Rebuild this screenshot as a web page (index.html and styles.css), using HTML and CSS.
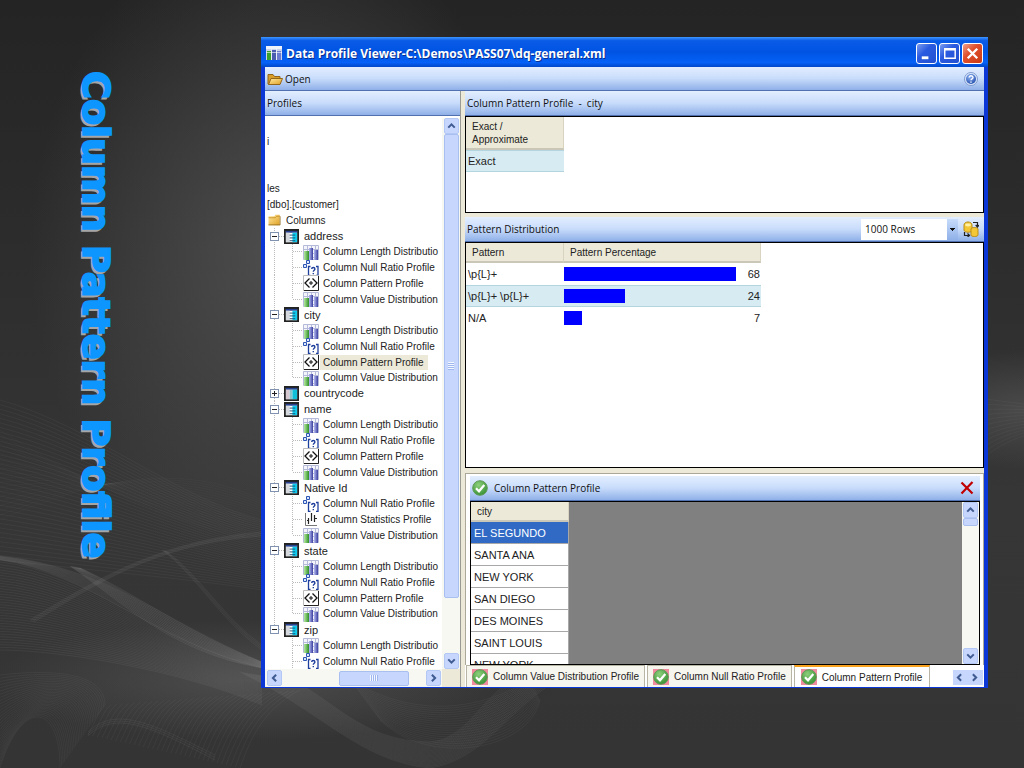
FILE: index.html
```html
<!DOCTYPE html>
<html lang="en">
<head>
    <meta charset="UTF-8">
    <meta name="viewport" content="width=device-width, initial-scale=1.0">
    <title>Column Pattern Profile</title>
    <link rel="stylesheet" href="styles.css">
</head>
<body>
    <!-- Shared icons -->
    <svg class="icon-defs" aria-hidden="true">
        <defs>
            <linearGradient id="folder-fill" x1="0" y1="0" x2="1" y2="1">
                <stop offset="0" stop-color="#ffe9a0"/><stop offset="1" stop-color="#e0a023"/>
            </linearGradient>
            <radialGradient id="help-fill" cx=".4" cy=".3" r=".8">
                <stop offset="0" stop-color="#8db4f4"/><stop offset="1" stop-color="#1c46a8"/>
            </radialGradient>
            <radialGradient id="check-fill" cx=".4" cy=".3" r=".8">
                <stop offset="0" stop-color="#8ed07c"/><stop offset="1" stop-color="#2f8a2c"/>
            </radialGradient>
            <linearGradient id="green-bar"><stop offset="0" stop-color="#b5e8a0"/><stop offset="1" stop-color="#2f8f27"/></linearGradient>
            <linearGradient id="blue-bar"><stop offset="0" stop-color="#b4bbf2"/><stop offset="1" stop-color="#3b3f9e"/></linearGradient>
        </defs>
        <symbol id="chart" viewBox="0 0 16 16">
            <path d="M.5 1.500h15v14H.5zM4.500 1v15M8.500 1v15M12.500 1v15M0 5.500h16M0 9.500h16M0 13.500h16" stroke="#b4bad8" fill="#f4f5fb"/>
            <path d="M1 7h5v9H1z" fill="url(#green-bar)"/>
            <path d="M6 4h4v12H6z" fill="url(#blue-bar)"/>
            <path d="M11 6h4v10h-4z" fill="url(#blue-bar)"/>
        </symbol>
        <symbol id="table" viewBox="0 0 16 16">
            <path d="M1 1h14v14H1z" fill="#fff" stroke="#222" stroke-width="2"/>
            <path d="M2 2h12v2H2z" fill="#27408f"/>
            <path d="M2 4h4v10H2z" fill="#d5d8dc"/>
            <path d="M9 4h5v10H9z" fill="#10cdf0"/>
            <path d="M6 6.500h6M6 9.500h6M6 12.500h6" stroke="#174f73"/>
        </symbol>
        <symbol id="table-shut" viewBox="0 0 16 16">
            <path d="M1 1h14v14H1z" fill="#fff" stroke="#222" stroke-width="2"/>
            <path d="M2 2h12v2H2z" fill="#27408f"/>
            <path d="M2 4h4v10H2z" fill="#d8c9d0"/>
            <path d="M6 4h3v10H6z" fill="#8fc3cc"/>
            <path d="M9 4h5v10H9z" fill="#10bfd8"/>
        </symbol>
        <symbol id="nulls" viewBox="0 0 16 16">
            <path d="M3.500.500h3v3h-3zM.500 4.500h3v3h-3z" fill="#dbe6ff" stroke="#2d55b4"/>
            <path d="M7.500 6.500h-2v9h2M13 6.500h2v9h-2" fill="none" stroke="#1f3f9c" stroke-width="1.300"/>
            <path d="M8.700 9c0-2 3.200-2 3.200 0 0 1.300-1.600 1.200-1.600 2.700M10.300 13v1.200" fill="none" stroke="#1f3f9c" stroke-width="1.400"/>
        </symbol>
        <symbol id="pattern" viewBox="0 0 16 16">
            <path d="M.5.5h15v15H.5z" fill="#fff" stroke="#bbb"/>
            <path d="M15.500 1v14.500H1" fill="none" stroke="#222"/>
            <path d="M6.500 3.500 2 8l4.500 4.500M9.500 3.500 14 8l-4.500 4.500" fill="none" stroke="#111" stroke-width="1.300"/>
            <path d="M8 6v4M6 8h4" stroke="#111"/>
        </symbol>
        <symbol id="stats" viewBox="0 0 16 16">
            <path d="M2.500 2v12.500H14" fill="none" stroke="#777"/>
            <path d="M5.500 7v6M8.500 2v8M11.500 4v7" stroke="#222" stroke-width="1.200"/>
            <path d="M4 9.500h2M11 7.500h3" stroke="#222"/>
        </symbol>
        <symbol id="check" viewBox="0 0 16 16">
            <circle cx="8" cy="8" r="7.300" fill="url(#check-fill)" stroke="#5f9a58"/>
            <path d="M4 8.300 7 11.300 12.300 5" fill="none" stroke="#fff" stroke-width="2.200"/>
        </symbol>
        <symbol id="folder" viewBox="0 0 16 16">
            <path d="M1 3.500h5l1.500 2H13V13H1z" fill="#d99d2b" stroke="#94661a"/>
            <path d="M4 7.500h11.500L13 13.500H1.500z" fill="url(#folder-fill)" stroke="#94661a"/>
        </symbol>
        <symbol id="folder-shut" viewBox="0 0 16 16">
            <path d="M0 3h8l1-2h6v14H0z" fill="url(#folder-fill)"/>
            <path d="M0 5h9l2-2h4" fill="none" stroke="#c08a1e"/>
            <path d="M0 14.500h15.500V3" fill="none" stroke="#8a671c"/>
        </symbol>
        <symbol id="help" viewBox="0 0 16 16">
            <circle cx="8" cy="8" r="6.500" fill="#dce8fb" stroke="#7f9cd0"/>
            <circle cx="8" cy="8" r="5" fill="url(#help-fill)"/>
            <path d="M6.200 6.500c0-2.400 3.800-2.200 3.800 0 0 1.500-2 1.300-2 2.800M8 10.500v1.200" fill="none" stroke="#fff" stroke-width="1.400"/>
        </symbol>
        <symbol id="refresh" viewBox="0 0 16 16">
            <path d="M1 4c0-4 8-4 8 0v5c0 3-8 3-8 0z" fill="#f3c736" stroke="#b98c17"/>
            <ellipse cx="5" cy="4" rx="3" ry="1.400" fill="#fff0a8"/>
            <path d="M8 8c0-2 7-2 7 0v6c0 2-7 2-7 0z" fill="#f3c736" stroke="#b98c17"/>
            <path d="M10 1.500h4.500V5M12.700 4l1.800 2 1.500-2M1.500 11v3.500H6M4.500 12.500l2 2-2 1.500" fill="none" stroke="#222" stroke-width="1.200"/>
        </symbol>
        <symbol id="app" viewBox="0 0 16 16">
            <path d="M0 1h16v14H0z" fill="#c9d3ec"/>
            <path d="M0 1h16v3H0z" fill="#eef2fb"/>
            <path d="M1 6h4v9H1z" fill="#3aa12f"/><path d="M6 5h4v10H6z" fill="#4a5cb0"/><path d="M11 6h4v9h-4z" fill="#6a7bd0"/>
            <path d="M5.500 4v11M10.500 4v11M0 7.500h16" stroke="#fff" stroke-opacity=".6"/>
        </symbol>
        <symbol id="up" viewBox="0 0 16 16"><path d="M4 10l4-4 4 4" fill="none" stroke="#3f5b91" stroke-width="2.500"/></symbol>
        <symbol id="down" viewBox="0 0 16 16"><path d="M4 6l4 4 4-4" fill="none" stroke="#3f5b91" stroke-width="2.500"/></symbol>
        <symbol id="left" viewBox="0 0 16 16"><path d="M10 4L6 8l4 4" fill="none" stroke="#3f5b91" stroke-width="2.500"/></symbol>
        <symbol id="right" viewBox="0 0 16 16"><path d="M6 4l4 4-4 4" fill="none" stroke="#3f5b91" stroke-width="2.500"/></symbol>
    </svg>

    <svg class="waves" id="waves" viewBox="0 0 1024 768" preserveAspectRatio="none" aria-hidden="true"></svg>

    <div class="slide">
        <h1 class="slide-title">Column Pattern Profile</h1>

        <main class="window">
            <header class="titlebar">
                <svg class="icon"><use href="#app"/></svg>
                <span class="titlebar-text">Data Profile Viewer-C:\Demos\PASS07\dq-general.xml</span>
                <button class="win-btn" aria-label="Minimize"><svg viewBox="0 0 20 20"><path d="M5 14.500h7" stroke="#fff" stroke-width="3"/></svg></button>
                <button class="win-btn" aria-label="Maximize"><svg viewBox="0 0 20 20"><path d="M5 5h11v10H5zM5 6h11" fill="none" stroke="#fff" stroke-width="1.500"/></svg></button>
                <button class="win-btn win-close" aria-label="Close"><svg viewBox="0 0 20 20"><path d="M5 5l10 10M15 5L5 15" stroke="#fff" stroke-width="2.500"/></svg></button>
            </header>

            <div class="bar toolbar">
                <button class="tool-btn"><svg class="icon"><use href="#folder"/></svg>Open</button>
                <button class="tool-btn" aria-label="Help"><svg class="icon"><use href="#help"/></svg></button>
            </div>

            <div class="panes">
                <section class="left-pane">
                    <h2 class="bar">Profiles</h2>
                    <div class="tree-box">
                        <ul class="tree">
                            <li></li>
                            <li>i</li>
                            <li></li>
                            <li></li>
                            <li>les</li>
                            <li>[dbo].[customer]</li>
                            <li class="folder"><svg class="icon"><use href="#folder-shut"/></svg>Columns</li>
                            <li class="node"><button class="toggle" aria-label="Collapse"></button><svg class="icon"><use href="#table"/></svg>address</li>
                            <li class="leaf"><svg class="icon"><use href="#chart"/></svg><span>Column Length Distributio</span></li>
                            <li class="leaf"><svg class="icon"><use href="#nulls"/></svg><span>Column Null Ratio Profile</span></li>
                            <li class="leaf"><svg class="icon"><use href="#pattern"/></svg><span>Column Pattern Profile</span></li>
                            <li class="leaf last"><svg class="icon"><use href="#chart"/></svg><span>Column Value Distribution</span></li>
                            <li class="node"><button class="toggle" aria-label="Collapse"></button><svg class="icon"><use href="#table"/></svg>city</li>
                            <li class="leaf"><svg class="icon"><use href="#chart"/></svg><span>Column Length Distributio</span></li>
                            <li class="leaf"><svg class="icon"><use href="#nulls"/></svg><span>Column Null Ratio Profile</span></li>
                            <li class="leaf selected"><svg class="icon"><use href="#pattern"/></svg><span>Column Pattern Profile</span></li>
                            <li class="leaf last"><svg class="icon"><use href="#chart"/></svg><span>Column Value Distribution</span></li>
                            <li class="node"><button class="toggle closed" aria-label="Expand"></button><svg class="icon"><use href="#table-shut"/></svg>countrycode</li>
                            <li class="node"><button class="toggle" aria-label="Collapse"></button><svg class="icon"><use href="#table"/></svg>name</li>
                            <li class="leaf"><svg class="icon"><use href="#chart"/></svg><span>Column Length Distributio</span></li>
                            <li class="leaf"><svg class="icon"><use href="#nulls"/></svg><span>Column Null Ratio Profile</span></li>
                            <li class="leaf"><svg class="icon"><use href="#pattern"/></svg><span>Column Pattern Profile</span></li>
                            <li class="leaf last"><svg class="icon"><use href="#chart"/></svg><span>Column Value Distribution</span></li>
                            <li class="node"><button class="toggle" aria-label="Collapse"></button><svg class="icon"><use href="#table"/></svg>Native Id</li>
                            <li class="leaf"><svg class="icon"><use href="#nulls"/></svg><span>Column Null Ratio Profile</span></li>
                            <li class="leaf"><svg class="icon"><use href="#stats"/></svg><span>Column Statistics Profile</span></li>
                            <li class="leaf last"><svg class="icon"><use href="#chart"/></svg><span>Column Value Distribution</span></li>
                            <li class="node"><button class="toggle" aria-label="Collapse"></button><svg class="icon"><use href="#table"/></svg>state</li>
                            <li class="leaf"><svg class="icon"><use href="#chart"/></svg><span>Column Length Distributio</span></li>
                            <li class="leaf"><svg class="icon"><use href="#nulls"/></svg><span>Column Null Ratio Profile</span></li>
                            <li class="leaf"><svg class="icon"><use href="#pattern"/></svg><span>Column Pattern Profile</span></li>
                            <li class="leaf last"><svg class="icon"><use href="#chart"/></svg><span>Column Value Distribution</span></li>
                            <li class="node end"><button class="toggle" aria-label="Collapse"></button><svg class="icon"><use href="#table"/></svg>zip</li>
                            <li class="leaf end"><svg class="icon"><use href="#chart"/></svg><span>Column Length Distributio</span></li>
                            <li class="leaf end"><svg class="icon"><use href="#nulls"/></svg><span>Column Null Ratio Profile</span></li>
                        </ul>
                        <div class="scroll-v">
                            <button class="scroll-btn" aria-label="Scroll up"><svg><use href="#up"/></svg></button>
                            <div class="thumb tree-thumb-v"></div>
                            <div class="track"></div>
                            <button class="scroll-btn" aria-label="Scroll down"><svg><use href="#down"/></svg></button>
                        </div>
                        <div class="scroll-h">
                            <button class="scroll-btn" aria-label="Scroll left"><svg><use href="#left"/></svg></button>
                            <div class="thumb tree-thumb-h"></div>
                            <button class="scroll-btn" aria-label="Scroll right"><svg><use href="#right"/></svg></button>
                        </div>
                    </div>
                </section>

                <section class="right-pane">
                    <h2 class="bar">Column Pattern Profile &nbsp;- &nbsp;city</h2>
                    <div class="sheet summary">
                        <table class="grid">
                            <thead><tr><th class="col-first">Exact /<br>Approximate</th></tr></thead>
                            <tbody><tr class="picked"><td>Exact</td></tr></tbody>
                        </table>
                    </div>

                    <div class="bar dist-bar">
                        <h2 class="bar-title">Pattern Distribution</h2>
                        <select class="rows-select" aria-label="Rows to show"><option>1000 Rows</option></select>
                        <button class="drill-btn" aria-label="Drill down"><svg class="icon"><use href="#refresh"/></svg></button>
                    </div>
                    <div class="sheet distribution">
                        <table class="grid">
                            <thead><tr><th class="col-first">Pattern</th><th class="col-percent">Pattern Percentage</th></tr></thead>
                            <tbody>
                                <tr><td>\p{L}+</td><td><div class="meter"><div class="meter-fill" style="width: 88%"></div>68</div></td></tr>
                                <tr class="picked"><td>\p{L}+ \p{L}+</td><td><div class="meter"><div class="meter-fill" style="width: 31%"></div>24</div></td></tr>
                                <tr><td>N/A</td><td><div class="meter"><div class="meter-fill" style="width: 9%"></div>7</div></td></tr>
                            </tbody>
                        </table>
                    </div>

                    <div class="drill">
                        <div class="bar drill-bar">
                            <svg class="icon"><use href="#check"/></svg>
                            <h2 class="bar-title">Column Pattern Profile</h2>
                            <button class="drill-close" aria-label="Close"><svg viewBox="0 0 14 14"><path d="M1.500 1.500l11 11M12.500 1L1.500 12.500" stroke="#c00000" stroke-width="2.200"/></svg></button>
                        </div>
                        <div class="sheet drill-sheet">
                            <div class="drill-rows">
                                <table class="grid cities">
                                    <thead><tr><th class="col-first">city</th></tr></thead>
                                    <tbody>
                                        <tr class="current"><td>EL SEGUNDO</td></tr>
                                        <tr><td>SANTA ANA</td></tr>
                                        <tr><td>NEW YORK</td></tr>
                                        <tr><td>SAN DIEGO</td></tr>
                                        <tr><td>DES MOINES</td></tr>
                                        <tr><td>SAINT LOUIS</td></tr>
                                        <tr><td>NEW YORK</td></tr>
                                    </tbody>
                                </table>
                            </div>
                            <div class="scroll-v">
                                <button class="scroll-btn" aria-label="Scroll up"><svg><use href="#up"/></svg></button>
                                <div class="thumb drill-thumb"></div>
                                <div class="track"></div>
                                <button class="scroll-btn" aria-label="Scroll down"><svg><use href="#down"/></svg></button>
                            </div>
                        </div>
                    </div>

                    <nav class="tabs">
                        <button class="tab"><svg class="icon"><use href="#check"/></svg>Column Value Distribution Profile</button>
                        <button class="tab"><svg class="icon"><use href="#check"/></svg>Column Null Ratio Profile</button>
                        <button class="tab active"><svg class="icon"><use href="#check"/></svg>Column Pattern Profile</button>
                        <div class="tab-scroll">
                            <button aria-label="Previous tab"><svg><use href="#left"/></svg></button>
                            <button aria-label="Next tab"><svg><use href="#right"/></svg></button>
                        </div>
                    </nav>
                </section>
            </div>
        </main>
    </div>

    <script>
        // Each family of lines blends from one cubic curve to another
        const families = [
            // from, to, number of lines, opacity
            [[0, 400, 90, 425, 180, 500, 262, 520], [0, 560, 90, 570, 200, 580, 262, 590], 36, 0.04],
            [[0, 430, 60, 470, 180, 530, 262, 540], [0, 520, 90, 480, 180, 460, 262, 500], 20, 0.02],
            [[0, 556, 110, 568, 160, 620, 262, 662], [0, 560, 90, 572, 150, 640, 262, 668], 14, 0.05],
            [[80, 568, 130, 590, 190, 635, 262, 662], [70, 566, 120, 600, 170, 652, 262, 668], 12, 0.07],
            [[0, 562, 90, 572, 150, 640, 262, 668], [0, 650, 60, 650, 180, 670, 262, 705], 34, 0.05],
            [[30, 620, 110, 570, 170, 540, 262, 532], [34, 622, 112, 572, 172, 542, 262, 536], 4, 0.06],
            [[165, 550, 200, 575, 225, 620, 262, 645], [162, 550, 196, 575, 222, 622, 262, 650], 4, 0.05],
            [[0, 675, 60, 668, 105, 675, 105, 705], [0, 768, 20, 700, 60, 700, 60, 768], 30, 0.04],
            [[105, 705, 98, 712, 96, 720, 88, 735], [300, 690, 262, 710, 250, 740, 240, 768], 34, 0.04],
            [[88, 732, 115, 706, 150, 722, 215, 755], [88, 736, 115, 710, 150, 726, 215, 760], 3, 0.05],
            [[290, 680, 330, 695, 360, 742, 430, 742], [240, 672, 320, 710, 360, 762, 430, 768], 24, 0.05],
            [[430, 742, 465, 740, 480, 700, 512, 680], [430, 768, 480, 760, 500, 720, 545, 688], 22, 0.05],
            [[350, 680, 410, 715, 470, 715, 530, 680], [380, 720, 430, 768, 530, 750, 540, 700], 20, 0.04],
            [[980, 398, 990, 400, 1010, 402, 1024, 404], [980, 462, 990, 450, 1010, 440, 1024, 436], 12, 0.03]
        ];

        const waves = document.getElementById("waves");
        families.forEach(([from, to, count, opacity]) => {
            let d = "";
            for (let i = 0; i < count; i++) {
                const p = from.map((v, k) => v + (to[k] - v) * i / (count - 1));
                d += `M${p[0]} ${p[1]}C${p.slice(2).join(" ")}`;
            }
            const path = document.createElementNS("http://www.w3.org/2000/svg", "path");
            path.setAttribute("d", d);
            path.setAttribute("stroke-opacity", opacity);
            waves.appendChild(path);
        });
    </script>
</body>
</html>
```

FILE: styles.css
```css
* {
    box-sizing: border-box;
}

body {
    margin: 0;
    background-color: #303030;
    background-image:
        radial-gradient(ellipse 250px 330px at 280px 250px, rgba(92, 92, 92, 0.7), rgba(60, 60, 60, 0)),
        radial-gradient(ellipse 120px 60px at 100% 410px, rgba(90, 90, 90, 0.6), rgba(60, 60, 60, 0)),
        radial-gradient(ellipse 260px 60px at 250px 680px, rgba(100, 100, 100, 0.5), rgba(60, 60, 60, 0)),
        linear-gradient(#242424, #2c2c2c 30%, #363636 65%, #343434 100%);
    font-family: "Liberation Sans", Arial, sans-serif;
    font-size: 10px;
    color: #222;
}

button {
    margin: 0;
    padding: 0;
    border: 0;
    background: none;
    font: inherit;
    color: inherit;
}

h1, h2 {
    margin: 0;
}

.icon-defs {
    position: absolute;
    width: 0;
    height: 0;
}

.icon {
    flex: none;
    width: 16px;
    height: 16px;
}

.waves {
    position: absolute;
    left: 0;
    top: 0;
    width: 100%;
    height: 100%;
    fill: none;
    stroke: #fff;
}

.slide {
    position: relative;
    display: grid;
    grid-template-columns: 261px minmax(0, 1fr);
    height: 100vh;
    min-height: 600px;
    padding: 37px 36px 80px 0;
}

.slide-title {
    writing-mode: vertical-rl;
    justify-self: start;
    padding: 34px 0 0 72px;
    font-family: "DejaVu Sans", sans-serif;
    font-size: 38px;
    line-height: 48px;
    font-weight: 700;
    color: #0d96ff;
    -webkit-text-stroke: 2px #0d96ff;
    text-shadow: 3px 2px 0 #a6a6a6;
    white-space: nowrap;
}

/* Window frame */
.window {
    display: flex;
    flex-direction: column;
    min-height: 0;
    border: solid #0a37d6;
    border-width: 0 4px 1px;
    background: #ece9d8;
}

.titlebar {
    display: flex;
    align-items: center;
    gap: 2px;
    height: 30px;
    margin: 0 -4px;
    padding: 2px 5px 0;
    background: linear-gradient(#3d95ff, #0a5be6 12%, #0054e3 50%, #0561f7 85%, #0148c9);
}

.titlebar-text {
    flex: 1;
    padding-left: 2px;
    font-family: "Open Sans", sans-serif;
    font-size: 12px;
    font-weight: 700;
    color: #fff;
    text-shadow: 1px 1px 0 #0a2f8f;
    white-space: nowrap;
}

.win-btn {
    width: 21px;
    height: 21px;
    border: 1px solid #fff;
    border-radius: 3px;
    background: linear-gradient(135deg, #7c9df0, #2a5ae0 40%, #2350d0);
}

.win-btn svg {
    display: block;
    width: 100%;
    height: 100%;
}

.win-close {
    background: linear-gradient(135deg, #f0a08a, #e0502c 40%, #c93a14);
}

/* Blue header bars */
.bar {
    display: flex;
    align-items: center;
    flex: none;
    height: 25px;
    padding: 0 2px;
    border-bottom: 1px solid #5070b0;
    background: linear-gradient(#e3eeff, #c8dcfb 50%, #8fb0e8);
    font-family: "Open Sans", sans-serif;
    font-size: 10px;
    font-weight: 400;
    color: #111;
    white-space: nowrap;
}

.bar-title {
    flex: 1;
    font-size: 10px;
    font-weight: 400;
}

.toolbar {
    height: 24px;
    justify-content: space-between;
}

.toolbar .tool-btn:last-child {
    padding-right: 3px;
}

.tool-btn {
    display: flex;
    align-items: center;
    gap: 2px;
}

.panes {
    display: grid;
    grid-template-columns: 196px minmax(0, 1fr);
    gap: 4px;
    flex: 1;
    min-height: 0;
}

/* Tree of profiles */
.left-pane {
    display: flex;
    flex-direction: column;
    min-height: 0;
    border-right: 1px solid #9a9a94;
}

.tree-box {
    display: grid;
    grid-template-columns: minmax(0, 1fr) 18px;
    grid-template-rows: minmax(0, 1fr) 18px;
    flex: 1;
    min-height: 0;
    padding-top: 2px;
    background: #fff;
}

.tree {
    display: grid;
    grid-auto-rows: minmax(0, 1fr);
    margin: 0;
    padding: 0;
    overflow: hidden;
    list-style: none;
    white-space: nowrap;
}

.tree li {
    display: flex;
    align-items: center;
    padding-left: 2px;
}

.tree .folder {
    gap: 4px;
}

.tree .folder .icon {
    width: 15px;
    height: 12px;
}

.tree .node,
.tree .leaf {
    background-image:
        repeating-linear-gradient(#bbb 0 1px, #fff 1px 2px),
        repeating-linear-gradient(#bbb 0 1px, #fff 1px 2px),
        repeating-linear-gradient(90deg, #bbb 0 1px, #fff 1px 2px);
    background-repeat: no-repeat;
}

.tree .node {
    gap: 5px;
    padding-left: 5px;
    background-size: 1px 100%, 0 0, 8px 1px;
    background-position: 9px 0, 0 0, 12px 50%;
    font-size: 11px;
}

.tree .node .icon {
    width: 15px;
    height: 15px;
}

.tree .leaf {
    gap: 1px;
    padding-left: 38px;
    background-size: 1px 100%, 1px 100%, 10px 1px;
    background-position: 9px 0, 27px 0, 28px 50%;
}

.tree .leaf.last {
    background-size: 1px 100%, 1px 50%, 10px 1px;
}

.tree .node.end {
    background-size: 1px 50%, 0 0, 8px 1px;
}

.tree .leaf.end {
    background-size: 0 0, 1px 100%, 10px 1px;
}

.tree .leaf span {
    padding: 0 4px 0 3px;
    line-height: 15px;
}

.tree .selected span {
    background: #ece9d8;
}

.toggle {
    width: 9px;
    height: 9px;
    border: 1px solid #7f93b0;
    background: linear-gradient(#222, #222) center / 5px 1px no-repeat #fff;
}

.toggle.closed {
    background:
        linear-gradient(#222, #222) center / 5px 1px no-repeat,
        linear-gradient(#222, #222) center / 1px 5px no-repeat #fff;
}

/* Scroll bars */
.scroll-v {
    display: flex;
    flex-direction: column;
    align-items: center;
    background: #f8f8f2;
}

.scroll-h {
    display: flex;
    align-items: center;
    justify-content: space-between;
    padding: 0 1px 0 2px;
    background: #f8f8f2;
}

.tree-box::after {
    content: "";
    background: #ece9d8;
}

.scroll-btn {
    flex: none;
    width: 15px;
    height: 16px;
    border: 1px solid #b4c8f6;
    border-radius: 2px;
    background: #c6d6fd;
}

.scroll-btn svg {
    display: block;
    width: 100%;
    height: 100%;
}

.thumb {
    width: 15px;
    border: 1px solid #a9bff0;
    border-radius: 2px;
    background: repeating-linear-gradient(#f3f7ff 0 1px, #9fb7ee 1px 2px) center / 6px 8px no-repeat #c6d6fd;
}

.tree-thumb-v {
    flex: 463;
}

.tree-thumb-v + .track {
    flex: 55;
}

.tree-thumb-h {
    width: 70px;
    height: 15px;
    margin-left: 40px;
    background: repeating-linear-gradient(90deg, #f3f7ff 0 1px, #9fb7ee 1px 2px) center / 8px 6px no-repeat #c6d6fd;
}

.drill-thumb {
    flex: none;
    height: 8px;
    background: #c6d6fd;
}

.drill-thumb + .track {
    flex: 1;
}

/* Sheets and grids */
.right-pane {
    display: flex;
    flex-direction: column;
    min-width: 0;
    min-height: 0;
}

.sheet {
    border: 1px solid #000;
    background: #fff;
    overflow: hidden;
}

.summary {
    flex: none;
    height: 97px;
}

.distribution {
    flex: 1;
    min-height: 0;
}

.grid {
    border-collapse: separate;
    border-spacing: 0;
    font-size: 11px;
}

.grid th {
    height: 20px;
    padding: 0 6px;
    border-bottom: 2px solid #cbc7b8;
    border-right: 1px solid #d8d4c0;
    background: #ece9d8;
    font-size: 10px;
    font-weight: 400;
    line-height: 13px;
    text-align: left;
}

.summary th {
    height: 33px;
}

.col-first {
    width: 98px;
}

.col-percent {
    width: 197px;
}

.grid td {
    height: 22px;
    padding: 0 2px;
    border: solid transparent;
    border-width: 1px 0;
}

.grid td:nth-child(2) {
    padding: 0 1px 0 0;
}

.picked td {
    background: #d7ebf2;
    border-color: #b3d5e0;
}

.meter {
    display: flex;
    align-items: center;
    justify-content: space-between;
}

.meter-fill {
    height: 14px;
    background: #00f;
}

.dist-bar {
    margin-top: 4px;
    padding-right: 1px;
}

.rows-select {
    width: 97px;
    height: 21px;
    padding: 0 4px;
    border: 0;
    border-radius: 0;
    appearance: none;
    background:
        linear-gradient(#111, #111) right 3px top 9px / 5px 1px no-repeat,
        linear-gradient(#111, #111) right 4px top 10px / 3px 1px no-repeat,
        linear-gradient(#111, #111) right 5px top 11px / 1px 1px no-repeat,
        linear-gradient(#c8dcfb, #8fb0e8) right / 11px 100% no-repeat #fff;
    font-family: "Open Sans", sans-serif;
    font-size: 10px;
    color: #111;
}

.drill-btn {
    display: flex;
    align-items: center;
    justify-content: center;
    width: 24px;
    height: 22px;
    margin-left: 1px;
}

/* Drill-through panel */
.drill {
    display: flex;
    flex-direction: column;
    flex: none;
    height: 192px;
    margin-top: 5px;
    padding: 2px 3px 0 4px;
    border: 1px solid #aca899;
    border-bottom: 0;
    background: #fff;
}

.drill-bar {
    gap: 6px;
}

.drill-close {
    width: 20px;
    height: 14px;
}

.drill-close svg {
    display: block;
    width: 14px;
    height: 14px;
    margin-left: 2px;
}

.drill-sheet {
    display: grid;
    grid-template-columns: minmax(0, 1fr) 17px;
    flex: 1;
    min-height: 0;
}

.drill-rows {
    min-height: 0;
    overflow: hidden;
    background: #808080;
}

.cities td {
    padding: 0 3px;
    border-width: 0 1px 1px 0;
    border-color: #a8a8a8;
    background: #fff;
}

.cities .current td {
    background: #316ac5;
    color: #fff;
}

/* Tabs */
.tabs {
    display: flex;
    flex: none;
    height: 22px;
    padding-left: 1px;
    background: #fff;
}

.tab {
    display: flex;
    align-items: center;
    gap: 5px;
    margin-right: 2px;
    padding: 0 5px;
    border: solid #b8b5a5;
    border-width: 1px 1px 0;
    background: #f6f5ee;
    white-space: nowrap;
}

.tab .icon {
    background: #f08ba0;
}

.tab.active {
    padding: 0 7px 0 6px;
    border-top: 2px solid #f7a11c;
    background: #fff;
}

.tab-scroll {
    display: flex;
    align-self: center;
    margin: 3px 1px 0 auto;
    background: #c6d6fd;
}

.tab-scroll button {
    width: 15px;
    height: 15px;
}

.tab-scroll svg {
    display: block;
    width: 13px;
    height: 15px;
}
```
